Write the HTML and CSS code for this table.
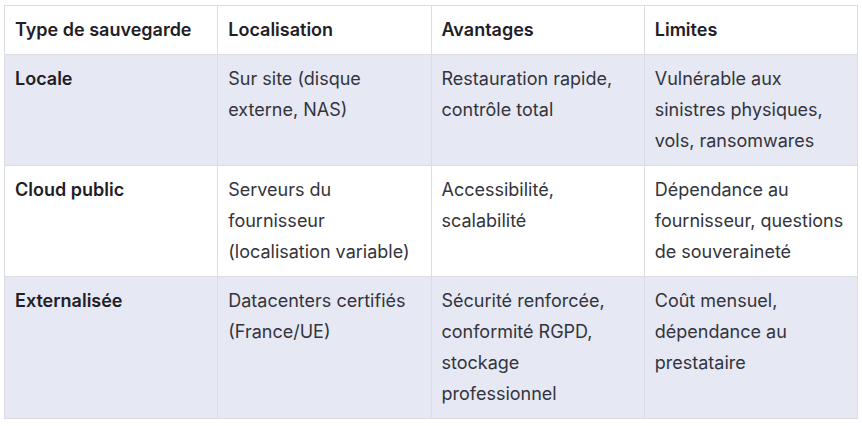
FILE: index.html
```html
<!DOCTYPE html>
<html lang="fr">
<head>
<meta charset="utf-8">
<link rel="stylesheet" href="styles.css">
</head>
<body>
<table class="grid">
  <thead>
    <tr>
      <th>Type de sauvegarde</th>
      <th>Localisation</th>
      <th>Avantages</th>
      <th>Limites</th>
    </tr>
  </thead>
  <tbody>
    <tr class="alt">
      <td class="first">Locale</td>
      <td>Sur site (disque externe, NAS)</td>
      <td>Restauration rapide, contrôle total</td>
      <td>Vulnérable aux sinistres physiques, vols, ransomwares</td>
    </tr>
    <tr>
      <td class="first">Cloud public</td>
      <td>Serveurs du fournisseur (localisation variable)</td>
      <td>Accessibilité, scalabilité</td>
      <td>Dépendance au fournisseur, questions de souveraineté</td>
    </tr>
    <tr class="alt">
      <td class="first">Externalisée</td>
      <td>Datacenters certifiés (France/UE)</td>
      <td>Sécurité renforcée, conformité RGPD, stockage professionnel</td>
      <td>Coût mensuel, dépendance au prestataire</td>
    </tr>
  </tbody>
</table>
</body>
</html>
```
FILE: styles.css
```css
html, body {
  margin: 0;
  background: #ffffff;
}
body {
  padding: 5px 4px;
  font-family: Inter, "Noto Sans", sans-serif;
  font-size: 18px;
  color: #33343c;
}
.grid {
  width: 854px;
  border-collapse: collapse;
  table-layout: fixed;
  border: 1px solid #dcdde3;
}
.grid th, .grid td {
  border: 1px solid #dcdde3;
  padding: 8px 10px 9px;
  text-align: left;
  vertical-align: top;
  line-height: 31px;
}
.grid th {
  font-weight: 600;
  color: #1f2026;
}
.grid td.first {
  font-weight: 600;
  color: #1f2026;
}
.grid tr.alt td {
  background: #e6e8f4;
}
```
